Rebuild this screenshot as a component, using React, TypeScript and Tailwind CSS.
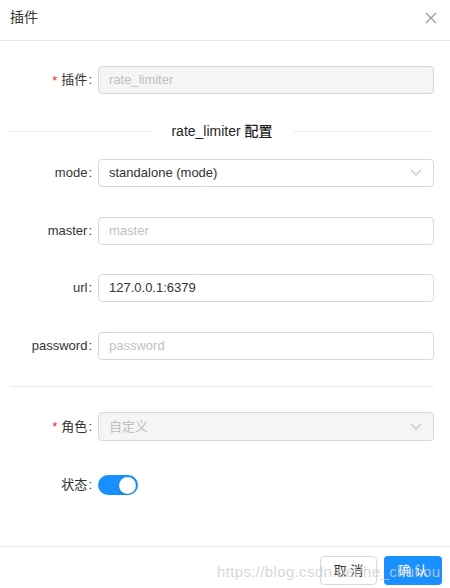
import { useState } from 'react';

const FONT = '"Liberation Sans", "Noto Sans CJK SC", sans-serif';

const Label = ({ text, required }: { text: string; required?: boolean }) => (
  <div className="w-[98px] shrink-0 flex items-center justify-end pr-[6px] text-[13px] text-[#333]">
    {required && <span className="text-[#f5222d] mr-[4px] text-[13px] leading-none">*</span>}
    <span>{text}</span>
    <span className="ml-[1px]">:</span>
  </div>
);

const Chevron = () => (
  <svg width="12" height="8" viewBox="0 0 12 8" className="shrink-0">
    <path d="M1 1l5 5 5-5" fill="none" stroke="#bfbfbf" strokeWidth="1.1" />
  </svg>
);

const App = () => {
  const [enabled, setEnabled] = useState(true);

  return (
    <div className="w-[450px] h-[588px] bg-white overflow-hidden relative" style={{ fontFamily: FONT }}>
      {/* header */}
      <div className="h-[41px] flex items-center justify-between pl-[10px] pr-[13px] border-b border-[#e8e8e8]">
        <span className="text-[14px] text-[#333] mb-[6px]">插件</span>
        <svg width="12" height="12" viewBox="0 0 12 12" className="mb-[4px]">
          <path d="M1 1l10 10M11 1L1 11" stroke="#999" strokeWidth="1.2" />
        </svg>
      </div>

      {/* body */}
      <div className="pr-[16px]">
        <div className="flex items-center mt-[25px]">
          <Label text="插件" required />
          <div className="flex-1 h-[28px] rounded-[4px] border border-[#d9d9d9] bg-[#f5f5f5] flex items-center px-[10px] text-[13px] text-[#bfbfbf]">
            rate_limiter
          </div>
        </div>

        <div className="flex items-center pl-[10px] mt-[27px] h-[20px]">
          <div className="flex-1 h-px bg-[#ececec]" />
          <span className="px-[20px] text-[14px] font-medium text-[#1f1f1f]">rate_limiter 配置</span>
          <div className="flex-1 h-px bg-[#ececec]" />
        </div>

        <div className="flex items-center mt-[18px]">
          <Label text="mode" />
          <div className="flex-1 h-[28px] rounded-[4px] border border-[#d9d9d9] flex items-center justify-between pl-[10px] pr-[11px] text-[13px] text-[#333]">
            <span>standalone (mode)</span>
            <Chevron />
          </div>
        </div>

        <div className="flex items-center mt-[30px]">
          <Label text="master" />
          <div className="flex-1 h-[28px] rounded-[4px] border border-[#d9d9d9] flex items-center px-[10px] text-[13px] text-[#bfbfbf]">
            master
          </div>
        </div>

        <div className="flex items-center mt-[29px]">
          <Label text="url" />
          <div className="flex-1 h-[28px] rounded-[4px] border border-[#d9d9d9] flex items-center px-[10px] text-[13px] text-[#333]">
            127.0.0.1:6379
          </div>
        </div>

        <div className="flex items-center mt-[30px]">
          <Label text="password" />
          <div className="flex-1 h-[28px] rounded-[4px] border border-[#d9d9d9] flex items-center px-[10px] text-[13px] text-[#bfbfbf]">
            password
          </div>
        </div>

        <div className="ml-[10px] mt-[26px] h-px bg-[#e8e8e8]" />

        <div className="flex items-center mt-[25px]">
          <Label text="角色" required />
          <div className="flex-1 h-[29px] rounded-[4px] border border-[#d9d9d9] bg-[#f5f5f5] flex items-center justify-between pl-[10px] pr-[11px] text-[13px] text-[#bfbfbf]">
            <span>自定义</span>
            <Chevron />
          </div>
        </div>

        <div className="flex items-center mt-[30px] h-[28px]">
          <Label text="状态" />
          <button
            onClick={() => setEnabled(!enabled)}
            className={`w-[40px] h-[20px] rounded-full flex items-center px-[2px] ${enabled ? 'bg-[#1890ff] justify-end' : 'bg-[#bfbfbf] justify-start'}`}
          >
            <span className="w-[17px] h-[17px] rounded-full bg-white shadow-[0_1px_2px_rgba(0,35,11,0.25)]" />
          </button>
        </div>
      </div>

      {/* footer */}
      <div className="absolute left-0 right-0 top-[546px] border-t border-[#e8e8e8] flex justify-end gap-[7px] pt-[9px] pr-[8px]">
        <button className="w-[57px] h-[29px] rounded-[4px] border border-[#d9d9d9] bg-white text-[13px] text-[#333]">
          取 消
        </button>
        <button className="w-[58px] h-[29px] rounded-[4px] bg-[#1890ff] text-[13px] text-white">
          确 认
        </button>
      </div>

      {/* watermark */}
      <div className="absolute left-[217px] top-[561px] text-[15px] tracking-[0.35px] text-[#cfcfcf] opacity-80 pointer-events-none whitespace-nowrap">
        https://blog.csdn.net/he_chuhou
      </div>
    </div>
  );
};

export default App;
